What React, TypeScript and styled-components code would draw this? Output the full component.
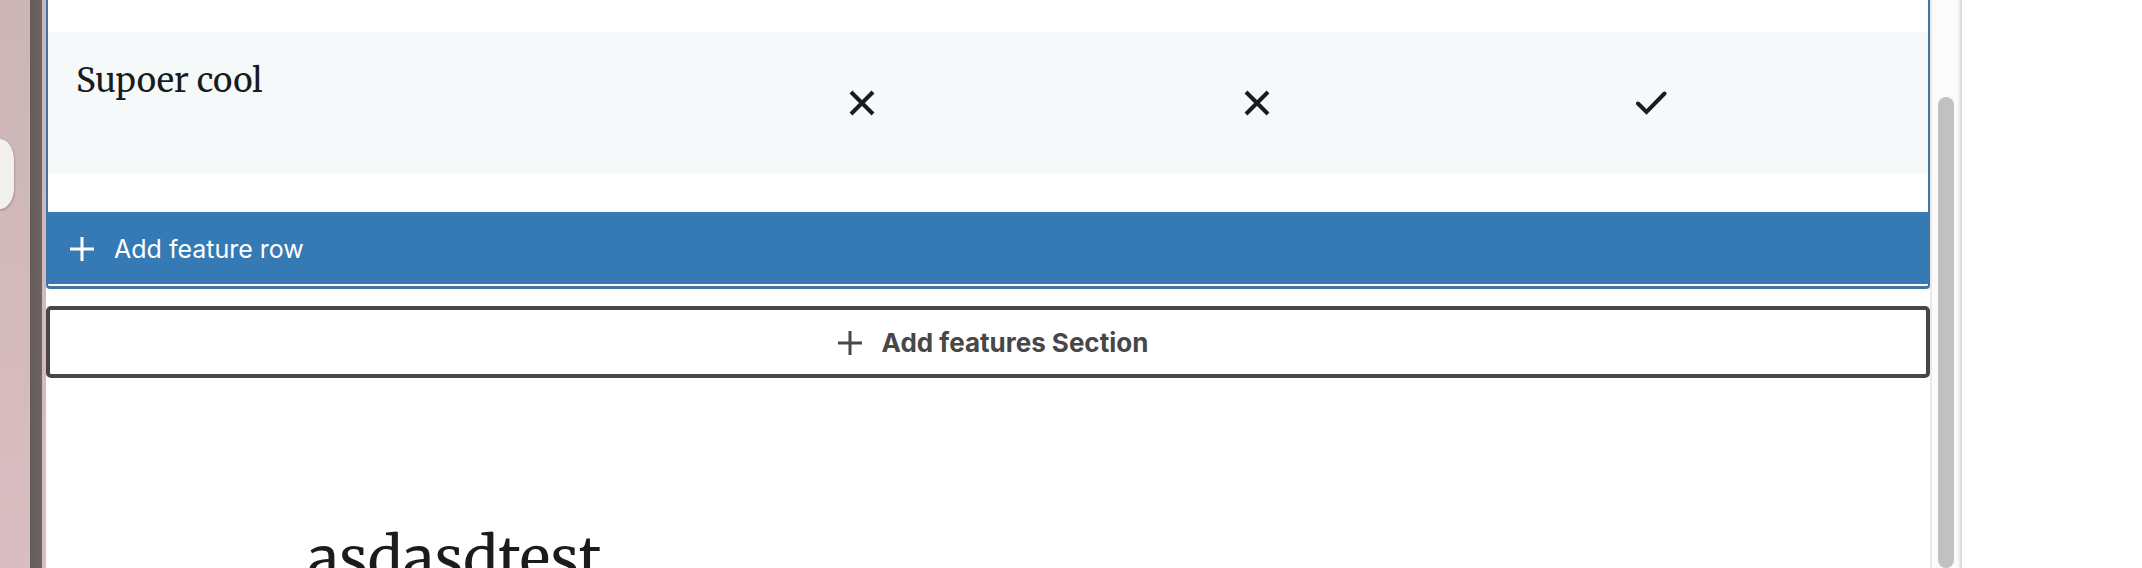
import React from "react";
import styled, { createGlobalStyle } from "styled-components";

const GlobalStyle = createGlobalStyle`
  * { box-sizing: border-box; }
  body { margin: 0; background: #ffffff; }
`;

const sans = `Inter, "Liberation Sans", sans-serif`;
const serif = `Merriweather, "Liberation Serif", serif`;

const Page = styled.div`
  display: flex;
  height: 100vh;
  overflow: hidden;
  background: #ffffff;
`;

const Backdrop = styled.aside`
  flex: none;
  width: 46px;
  display: flex;
  background: linear-gradient(#cbb6b5, #cfb8b9 30%, #dabdc2);
`;

const BackdropView = styled.div`
  width: 30px;
  overflow: hidden;
  padding-top: 139px;
`;

const Knob = styled.div`
  width: 14px;
  height: 70px;
  border-radius: 0 16px 16px 0 / 0 24px 24px 0;
  background: #f1f0ef;
  box-shadow: 0 1px 3px rgba(60, 30, 30, 0.4);
`;

const Divider = styled.div`
  width: 12px;
  background: linear-gradient(90deg, #655c5a, #6e6463);
`;

const Editor = styled.main`
  flex: 1;
  min-width: 0;
`;

const FeatureBlock = styled.section`
  border: 2px solid #41749f;
  border-top: 0;
  border-bottom-width: 3px;
  border-radius: 0 0 4px 4px;
  padding: 32px 0 2px;
`;

const Band = styled.div`
  background: #f5f9fa;
  padding-right: 78px;
  margin-bottom: 38px;
`;

const Table = styled.table`
  width: 100%;
  table-layout: fixed;
  border-collapse: collapse;
`;

const FeatureName = styled.th`
  width: 34.2%;
  height: 142px;
  padding: 24px 28px;
  vertical-align: top;
  text-align: left;
  font: 400 33px/50px ${serif};
  color: #191b1c;
`;

const FeatureValue = styled.td`
  padding: 0;
  text-align: center;
  vertical-align: middle;
`;

const Icon = styled.svg`
  display: block;
  flex: none;
`;

const CellIcon = styled(Icon)`
  margin: 0 auto;
`;

const ActionButton = styled.button`
  display: flex;
  align-items: center;
  width: 100%;
  height: 72px;
  margin: 0;
  gap: 18px;
  font-family: ${sans};
  line-height: 32px;
  cursor: pointer;
`;

const AddRowButton = styled(ActionButton)`
  padding: 1px 20px 0;
  border: 0;
  background: #3579b5;
  color: #ffffff;
  font-size: 25px;
`;

const AddSectionButton = styled(ActionButton)`
  justify-content: center;
  margin-top: 17px;
  padding: 1px 16px 0 24px;
  border: 4px solid #484747;
  border-radius: 5px;
  background: #ffffff;
  color: #484747;
  font-size: 26px;
  font-weight: 700;
`;

const Heading = styled.h2`
  margin: 137px 0 0 262px;
  font: 400 58px/88px ${serif};
  color: #191b1c;
`;

const ScrollTrack = styled.div`
  flex: none;
  width: 32px;
  padding: 97px 4px 0 6px;
  border-left: 2px solid #e9e9e9;
  border-right: 2px solid #dedede;
  background: #fbfbfb;
  box-shadow: inset -2px 0 #eeeeee;
`;

const ScrollThumb = styled.div`
  width: 16px;
  height: 100%;
  border-radius: 8px;
  background: #c1c1c1;
`;

const SidePanel = styled.div`
  flex: none;
  width: 180px;
`;

const PlusIcon = () => (
  <Icon width="28" height="28" viewBox="0 0 28 28" aria-hidden="true">
    <path d="M14 2v24M2 14h24" stroke="currentColor" strokeWidth="3" fill="none" />
  </Icon>
);

const CrossIcon = () => (
  <CellIcon width="32" height="32" viewBox="0 0 32 32" role="img" aria-label="Not included">
    <path d="M5 5l22 22M27 5L5 27" stroke="#191b1c" strokeWidth="4" fill="none" />
  </CellIcon>
);

const CheckIcon = () => (
  <CellIcon width="32" height="32" viewBox="0 0 32 32" role="img" aria-label="Included">
    <path
      d="M2 16.500l8.500 8.500L28.500 6.500"
      stroke="#191b1c"
      strokeWidth="4"
      strokeLinecap="round"
      fill="none"
    />
  </CellIcon>
);

const included = [false, false, true];

export default function App() {
  return (
    <>
      <GlobalStyle />
      <Page>
        <Backdrop>
          <BackdropView>
            <Knob />
          </BackdropView>
          <Divider />
        </Backdrop>
        <Editor>
          <FeatureBlock>
            <Band>
              <Table>
                <tbody>
                  <tr>
                    <FeatureName scope="row">Supoer cool</FeatureName>
                    {included.map((value, index) => (
                      <FeatureValue key={index}>
                        {value ? <CheckIcon /> : <CrossIcon />}
                      </FeatureValue>
                    ))}
                  </tr>
                </tbody>
              </Table>
            </Band>
            <AddRowButton type="button">
              <PlusIcon />
              Add feature row
            </AddRowButton>
          </FeatureBlock>
          <AddSectionButton type="button">
            <PlusIcon />
            Add features Section
          </AddSectionButton>
          <Heading>asdasdtest</Heading>
        </Editor>
        <ScrollTrack>
          <ScrollThumb />
        </ScrollTrack>
        <SidePanel />
      </Page>
    </>
  );
}
